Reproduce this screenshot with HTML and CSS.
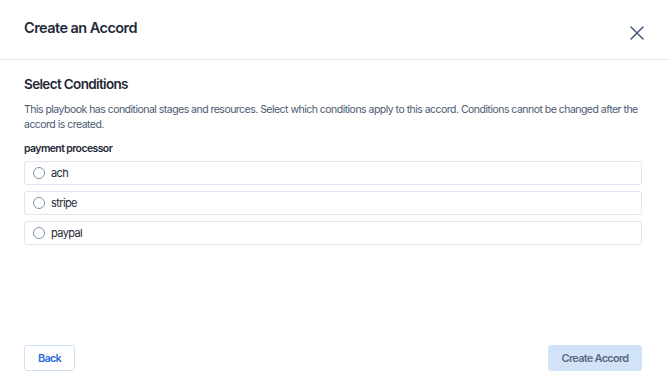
FILE: index.html
```html
<!DOCTYPE html>
<html lang="en">
<head>
  <meta charset="UTF-8">
  <title>Create an Accord</title>
  <link rel="stylesheet" href="styles.css">
</head>
<body>
  <div class="modal">
    <div class="modal-header">
      <h1 class="title">Create an Accord</h1>
      <button class="close" aria-label="Close">
        <svg width="14" height="14" viewBox="0 0 14 14"><path d="M1 1L13 13M13 1L1 13" stroke="#4a5f80" stroke-width="1.6" stroke-linecap="round"/></svg>
      </button>
    </div>
    <div class="modal-body">
      <h2 class="subtitle">Select Conditions</h2>
      <p class="desc">This playbook has conditional stages and resources. Select which conditions apply to this accord. Conditions cannot be changed after the accord is created.</p>
      <div class="group-label">payment processor</div>
      <div class="options">
        <label class="option"><span class="radio"></span>ach</label>
        <label class="option"><span class="radio"></span>stripe</label>
        <label class="option"><span class="radio"></span>paypal</label>
      </div>
    </div>
    <div class="modal-footer">
      <button class="btn btn-back">Back</button>
      <button class="btn btn-create">Create Accord</button>
    </div>
  </div>
</body>
</html>
```

FILE: styles.css
```css
* {
  box-sizing: border-box;
}

body {
  margin: 0;
  font-family: Inter, "Noto Sans", sans-serif;
  background-color: #fff;
  color: #1e293b;
}

.modal {
  width: 670px;
  height: 384px;
  display: flex;
  flex-direction: column;
}

.modal-header {
  height: 60px;
  border-bottom: 1px solid #e5eaf1;
  display: flex;
  justify-content: space-between;
  align-items: flex-start;
  padding: 19px 24px 0 24px;
}

.title {
  margin: 0;
  font-size: 14.5px;
  font-weight: 600;
  letter-spacing: -0.55px;
  color: #1f2937;
}

.close {
  border: none;
  background: none;
  padding: 0;
  margin-top: 7px;
  margin-right: 2px;
  width: 14px;
  height: 14px;
  cursor: pointer;
}

.modal-body {
  flex: 1;
  padding: 16px 28px 0 24px;
}

.subtitle {
  margin: 0 0 10px 0;
  font-size: 13.5px;
  font-weight: 600;
  letter-spacing: -0.65px;
  color: #1f2937;
}

.desc {
  margin: 0 0 10px 0;
  font-size: 10.5px;
  line-height: 15px;
  letter-spacing: -0.52px;
  color: #4b5a72;
}

.group-label {
  font-size: 10.5px;
  font-weight: 600;
  letter-spacing: -0.6px;
  color: #1f2937;
  margin-bottom: 6px;
}

.options {
  display: flex;
  flex-direction: column;
  gap: 6px;
}

.option {
  height: 24px;
  border: 1px solid #dfe5ee;
  border-radius: 3px;
  display: flex;
  align-items: center;
  padding-left: 8px;
  font-size: 11px;
  letter-spacing: -0.6px;
  color: #1f2937;
}

.radio {
  width: 12px;
  height: 12px;
  border: 1.3px solid #8493ab;
  border-radius: 50%;
  margin-right: 6px;
}

.modal-footer {
  display: flex;
  justify-content: space-between;
  padding: 0 28px 13px 24px;
}

.btn {
  height: 26px;
  border-radius: 3px;
  font-family: inherit;
  font-size: 11px;
  font-weight: 600;
  letter-spacing: -0.75px;
  cursor: pointer;
}

.btn-back {
  width: 51px;
  background-color: #fff;
  border: 1px solid #cfe0f5;
  color: #2e6fd8;
}

.btn-create {
  width: 94px;
  background-color: #d2e3f7;
  border: none;
  color: #5b6b85;
}
```
